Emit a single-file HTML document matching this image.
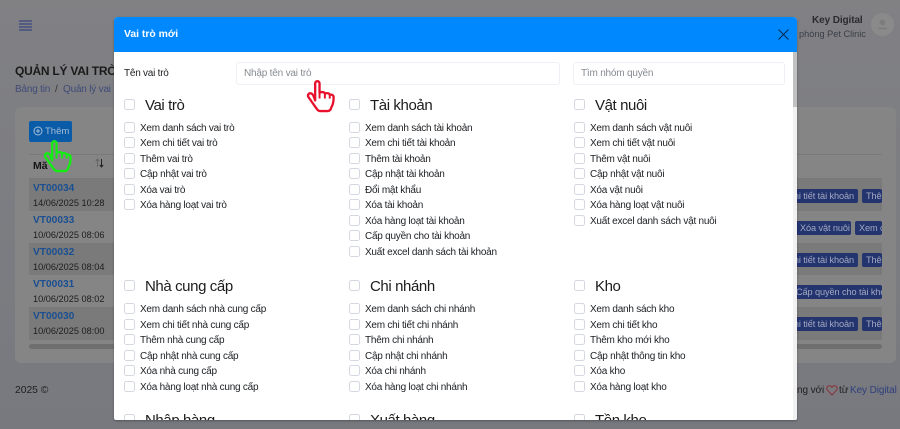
<!DOCTYPE html>
<html><head><meta charset="utf-8"><style>
*{box-sizing:border-box}
html,body{margin:0;padding:0;width:900px;height:429px;overflow:hidden}
body{position:relative;background:linear-gradient(#818184 0,#77797f 100%);font-family:"Liberation Sans",sans-serif;color:#222}
.a{position:absolute;white-space:nowrap;line-height:14px}
.card{position:absolute;left:15px;top:107px;width:881px;height:256px;background:#858585;border-radius:6px}
.row{position:absolute;left:29px;width:853px;height:32px}
.row.s{background:#7a7a7a}
.b{position:absolute;height:14px;background:#23346f;color:#a3a9c0;font-size:9.2px;letter-spacing:-.1px;line-height:14px;border-radius:2px;padding:0 4px;white-space:nowrap;overflow:hidden;display:flex}
.b.r{justify-content:flex-end}
.b span{flex:none}
.id{color:#1a4f92;font-size:10.2px;font-weight:bold;margin-top:1px}
.dt{color:#1d1d1d;font-size:9.2px}
.modal{position:absolute;left:114px;top:17px;width:683px;height:403px;background:#fff;border-radius:4px 4px 2px 2px;overflow:hidden;box-shadow:0 1px 2px rgba(0,0,0,.3)}
.hd{position:absolute;left:0;top:0;width:683px;height:35px;background:#0088ff;color:#fff;font-size:10.4px;font-weight:bold;line-height:35px;padding-left:10px}
.in{position:absolute;top:45px;height:23px;background:#fff;border:1px solid #edf1f6;border-radius:3px;color:#868b91;font-size:10px;letter-spacing:-.2px;line-height:22px;padding-left:7px}
.c{position:absolute;width:11px;height:11px;border:1px solid #d5d8e0;border-radius:2.5px;background:#fff}
.t{position:absolute;font-size:15px;letter-spacing:-.4px;line-height:18px;color:#1c1c1c;white-space:nowrap;margin-top:1px}
.l{position:absolute;font-size:10px;letter-spacing:-.24px;line-height:14px;color:#1b1e22;white-space:nowrap;margin-top:1px}
</style></head><body>

<svg class="a" style="left:19px;top:20px" width="13" height="12" viewBox="0 0 13 12"><path d="M0 1h13M0 4h13M0 7h13M0 10h13" stroke="#38467e" stroke-width="1.2" fill="none"/></svg>
<div class="a" style="left:15px;top:64px;font-size:12px;letter-spacing:-.25px;font-weight:bold;color:#1a1a1a">QUẢN LÝ VAI TRÒ</div>
<div class="a" style="left:15px;top:83px;font-size:10px;letter-spacing:-.2px;color:#3f4b78">Bảng tin</div>
<div class="a" style="left:55px;top:83px;font-size:10px;color:#333">/</div>
<div class="a" style="left:63px;top:83px;font-size:10px;letter-spacing:-.2px;color:#3f4b78">Quản lý vai trò</div>
<div class="a" style="left:812px;top:14px;font-size:10px;letter-spacing:-.1px;font-weight:bold;color:#2b2b2f">Key Digital</div>
<div class="a" style="left:799px;top:27px;font-size:9.2px;color:#3a3d47">phòng Pet Clinic</div>
<div class="a" style="left:871px;top:13px;width:23px;height:23px;border-radius:50%;background:#8a8a8a"></div>
<svg class="a" style="left:876px;top:18px" width="13" height="13" viewBox="0 0 13 13"><circle cx="6.500" cy="4.500" r="2.800" fill="#7c7c7c"/><path d="M2 10.500h9" stroke="#7c7c7c" stroke-width="1.500"/></svg>

<div class="card"></div>
<div class="a" style="left:29px;top:121px;width:43px;height:21px;background:#0a5ba8;border-radius:2px;color:#a5bdd6;font-size:9.500px;line-height:21px;padding-left:16px">Thêm</div>
<svg class="a" style="left:33px;top:126px" width="10" height="10" viewBox="0 0 10 10"><circle cx="5" cy="5" r="4" fill="none" stroke="#a5bdd6"/><path d="M5 3v4M3 5h4" stroke="#a5bdd6"/></svg>
<div class="a" style="left:29px;top:154px;width:853px;height:1px;background:#797979"></div>
<div class="a" style="left:29px;top:178px;width:853px;height:1px;background:#797979"></div>
<div class="a" style="left:33px;top:159px;font-size:10.500px;font-weight:bold;color:#151515">Mã</div>
<svg class="a" style="left:95px;top:158px" width="9" height="10" viewBox="0 0 9 10"><path d="M2.500 9V1M.8 3 2.500 1 4.200 3" stroke="#666" fill="none"/><path d="M6.500 1v8M4.800 7l1.700 2 1.700-2" stroke="#222" fill="none"/></svg>
<div class="row s" style="top:179px"></div>
<div class="row" style="top:211px"></div>
<div class="row s" style="top:243px"></div>
<div class="row" style="top:275px"></div>
<div class="row s" style="top:307px;height:33px"></div>
<div class="a id" style="left:33px;top:181px">VT00034</div><div class="a dt" style="left:33px;top:196px">14/06/2025 10:28</div>
<div class="a id" style="left:33px;top:213px">VT00033</div><div class="a dt" style="left:33px;top:228px">10/06/2025 08:06</div>
<div class="a id" style="left:33px;top:245px">VT00032</div><div class="a dt" style="left:33px;top:260px">10/06/2025 08:04</div>
<div class="a id" style="left:33px;top:277px">VT00031</div><div class="a dt" style="left:33px;top:292px">10/06/2025 08:02</div>
<div class="a id" style="left:33px;top:309px">VT00030</div><div class="a dt" style="left:33px;top:324px">10/06/2025 08:00</div>
<div class="a" style="left:29px;top:344px;width:853px;height:5px;background:#6f6f6f;border-radius:3px"></div>

<div class="b r" style="left:790px;top:189px;width:68px"><span>Xem chi tiết tài khoản</span></div>
<div class="b" style="left:862px;top:189px;width:20px"><span>Thêm</span></div>
<div class="b" style="left:790px;top:221px;width:61px;padding-left:10px"><span>Xóa vật nuôi</span></div>
<div class="b" style="left:855px;top:221px;width:27px"><span>Xem chi</span></div>
<div class="b r" style="left:790px;top:253px;width:68px"><span>Xem chi tiết tài khoản</span></div>
<div class="b" style="left:862px;top:253px;width:20px"><span>Thêm</span></div>
<div class="b" style="left:790px;top:285px;width:92px;padding-left:6px"><span>Cấp quyền cho tài khoản</span></div>
<div class="b r" style="left:790px;top:317px;width:68px"><span>Xem chi tiết tài khoản</span></div>
<div class="b" style="left:862px;top:317px;width:20px"><span>Thêm</span></div>

<div class="a" style="left:15px;top:384px;font-size:10.300px;color:#1f1f1f">2025 ©</div>
<div class="a" style="left:797px;top:384px;font-size:10px;letter-spacing:-.1px;color:#1f1f1f">ng với</div>
<svg class="a" style="left:826px;top:385px" width="12" height="11" viewBox="0 0 12 11"><path d="M6 10 1.500 5.200C-.3 3 1.500.8 3.500.8 4.700.8 5.500 1.500 6 2.300 6.500 1.500 7.300.8 8.500.8c2 0 3.800 2.200 2 4.400z" fill="none" stroke="#8a3237"/></svg>
<div class="a" style="left:839px;top:384px;font-size:10px;color:#1f1f1f">từ</div>
<div class="a" style="left:850px;top:384px;font-size:10px;letter-spacing:-.1px;color:#2f3f7c">Key Digital</div>

<div class="modal">
<div class="hd">Vai trò mới</div>
<svg style="position:absolute;left:664px;top:12px" width="11" height="11" viewBox="0 0 11 11"><path d="M.5.5l10 10M10.500.5l-10 10" stroke="#0a2a4a" stroke-width="1" fill="none"/></svg>
<div class="l" style="left:10px;top:49px">Tên vai trò</div>
<div class="in" style="left:122px;width:324px">Nhập tên vai trò</div>
<div class="in" style="left:459px;width:212px">Tìm nhóm quyền</div>
<div style="position:absolute;left:679px;top:35px;width:4px;height:368px;background:#f1f1f1"></div>
<div style="position:absolute;left:679px;top:35px;width:4px;height:55px;background:#c1c1c1"></div>

<div class="c" style="left:10px;top:82px"></div><div class="t" style="left:31px;top:79px">Vai trò</div>
<div class="c" style="left:10px;top:105px"></div><div class="l" style="left:26px;top:104px">Xem danh sách vai trò</div>
<div class="c" style="left:10px;top:120px"></div><div class="l" style="left:26px;top:119px">Xem chi tiết vai trò</div>
<div class="c" style="left:10px;top:136px"></div><div class="l" style="left:26px;top:135px">Thêm vai trò</div>
<div class="c" style="left:10px;top:151px"></div><div class="l" style="left:26px;top:150px">Cập nhật vai trò</div>
<div class="c" style="left:10px;top:167px"></div><div class="l" style="left:26px;top:166px">Xóa vai trò</div>
<div class="c" style="left:10px;top:182px"></div><div class="l" style="left:26px;top:181px">Xóa hàng loạt vai trò</div>

<div class="c" style="left:235px;top:82px"></div><div class="t" style="left:256px;top:79px">Tài khoản</div>
<div class="c" style="left:235px;top:105px"></div><div class="l" style="left:251px;top:104px">Xem danh sách tài khoản</div>
<div class="c" style="left:235px;top:120px"></div><div class="l" style="left:251px;top:119px">Xem chi tiết tài khoản</div>
<div class="c" style="left:235px;top:136px"></div><div class="l" style="left:251px;top:135px">Thêm tài khoản</div>
<div class="c" style="left:235px;top:151px"></div><div class="l" style="left:251px;top:150px">Cập nhật tài khoản</div>
<div class="c" style="left:235px;top:167px"></div><div class="l" style="left:251px;top:166px">Đổi mật khẩu</div>
<div class="c" style="left:235px;top:182px"></div><div class="l" style="left:251px;top:181px">Xóa tài khoản</div>
<div class="c" style="left:235px;top:198px"></div><div class="l" style="left:251px;top:197px">Xóa hàng loạt tài khoản</div>
<div class="c" style="left:235px;top:213px"></div><div class="l" style="left:251px;top:212px">Cấp quyền cho tài khoản</div>
<div class="c" style="left:235px;top:229px"></div><div class="l" style="left:251px;top:228px">Xuất excel danh sách tài khoản</div>

<div class="c" style="left:460px;top:82px"></div><div class="t" style="left:481px;top:79px">Vật nuôi</div>
<div class="c" style="left:460px;top:105px"></div><div class="l" style="left:476px;top:104px">Xem danh sách vật nuôi</div>
<div class="c" style="left:460px;top:120px"></div><div class="l" style="left:476px;top:119px">Xem chi tiết vật nuôi</div>
<div class="c" style="left:460px;top:136px"></div><div class="l" style="left:476px;top:135px">Thêm vật nuôi</div>
<div class="c" style="left:460px;top:151px"></div><div class="l" style="left:476px;top:150px">Cập nhật vật nuôi</div>
<div class="c" style="left:460px;top:167px"></div><div class="l" style="left:476px;top:166px">Xóa vật nuôi</div>
<div class="c" style="left:460px;top:182px"></div><div class="l" style="left:476px;top:181px">Xóa hàng loạt vật nuôi</div>
<div class="c" style="left:460px;top:198px"></div><div class="l" style="left:476px;top:197px">Xuất excel danh sách vật nuôi</div>

<div class="c" style="left:10px;top:263px"></div><div class="t" style="left:31px;top:260px">Nhà cung cấp</div>
<div class="c" style="left:10px;top:286px"></div><div class="l" style="left:26px;top:285px">Xem danh sách nhà cung cấp</div>
<div class="c" style="left:10px;top:302px"></div><div class="l" style="left:26px;top:301px">Xem chi tiết nhà cung cấp</div>
<div class="c" style="left:10px;top:317px"></div><div class="l" style="left:26px;top:316px">Thêm nhà cung cấp</div>
<div class="c" style="left:10px;top:333px"></div><div class="l" style="left:26px;top:332px">Cập nhật nhà cung cấp</div>
<div class="c" style="left:10px;top:348px"></div><div class="l" style="left:26px;top:347px">Xóa nhà cung cấp</div>
<div class="c" style="left:10px;top:364px"></div><div class="l" style="left:26px;top:363px">Xóa hàng loạt nhà cung cấp</div>

<div class="c" style="left:235px;top:263px"></div><div class="t" style="left:256px;top:260px">Chi nhánh</div>
<div class="c" style="left:235px;top:286px"></div><div class="l" style="left:251px;top:285px">Xem danh sách chi nhánh</div>
<div class="c" style="left:235px;top:302px"></div><div class="l" style="left:251px;top:301px">Xem chi tiết chi nhánh</div>
<div class="c" style="left:235px;top:317px"></div><div class="l" style="left:251px;top:316px">Thêm chi nhánh</div>
<div class="c" style="left:235px;top:333px"></div><div class="l" style="left:251px;top:332px">Cập nhật chi nhánh</div>
<div class="c" style="left:235px;top:348px"></div><div class="l" style="left:251px;top:347px">Xóa chi nhánh</div>
<div class="c" style="left:235px;top:364px"></div><div class="l" style="left:251px;top:363px">Xóa hàng loạt chi nhánh</div>

<div class="c" style="left:460px;top:263px"></div><div class="t" style="left:481px;top:260px">Kho</div>
<div class="c" style="left:460px;top:286px"></div><div class="l" style="left:476px;top:285px">Xem danh sách kho</div>
<div class="c" style="left:460px;top:302px"></div><div class="l" style="left:476px;top:301px">Xem chi tiết kho</div>
<div class="c" style="left:460px;top:317px"></div><div class="l" style="left:476px;top:316px">Thêm kho mới kho</div>
<div class="c" style="left:460px;top:333px"></div><div class="l" style="left:476px;top:332px">Cập nhật thông tin kho</div>
<div class="c" style="left:460px;top:348px"></div><div class="l" style="left:476px;top:347px">Xóa kho</div>
<div class="c" style="left:460px;top:364px"></div><div class="l" style="left:476px;top:363px">Xóa hàng loạt kho</div>

<div class="c" style="left:10px;top:397px"></div><div class="t" style="left:31px;top:394px">Nhập hàng</div>
<div class="c" style="left:235px;top:397px"></div><div class="t" style="left:256px;top:394px">Xuất hàng</div>
<div class="c" style="left:460px;top:397px"></div><div class="t" style="left:481px;top:394px">Tồn kho</div>
</div>

<svg class="a" style="left:305px;top:80px" width="32" height="34" viewBox="0 0 32 35"><path d="M10 21V3.500a2.200 2.200 0 0 1 4.500 0V13c3-1.200 5-.5 5.500 1 2.500-1 4.500-.3 5 1.200 2-.5 4 .3 4 2.800 0 5-1 8-2.500 10.500-.5 2.500-2 3.500-4 3.500H15.500c-2 0-3-.8-4-2.500L3 17.500c-1-1.800 0-3.500 1.500-3.800 1.500-.3 2.500.5 3.500 2z" fill="#fff" stroke="#e8112d" stroke-width="2.400" stroke-linejoin="round"/><path d="M14.500 13v6M20 14v5M25 15.200v4" stroke="#e8112d" stroke-width="2" fill="none"/></svg>
<svg class="a" style="left:42px;top:140px" width="32" height="34" viewBox="0 0 32 35"><path d="M10 21V3.500a2.200 2.200 0 0 1 4.500 0V13c3-1.200 5-.5 5.500 1 2.500-1 4.500-.3 5 1.200 2-.5 4 .3 4 2.800 0 5-1 8-2.500 10.500-.5 2.500-2 3.500-4 3.500H15.500c-2 0-3-.8-4-2.500L3 17.500c-1-1.800 0-3.500 1.500-3.800 1.500-.3 2.500.5 3.500 2z" fill="#858585" stroke="#12ee12" stroke-width="2.400" stroke-linejoin="round"/><path d="M14.500 13v6M20 14v5M25 15.200v4" stroke="#12ee12" stroke-width="2" fill="none"/></svg>
</body></html>
